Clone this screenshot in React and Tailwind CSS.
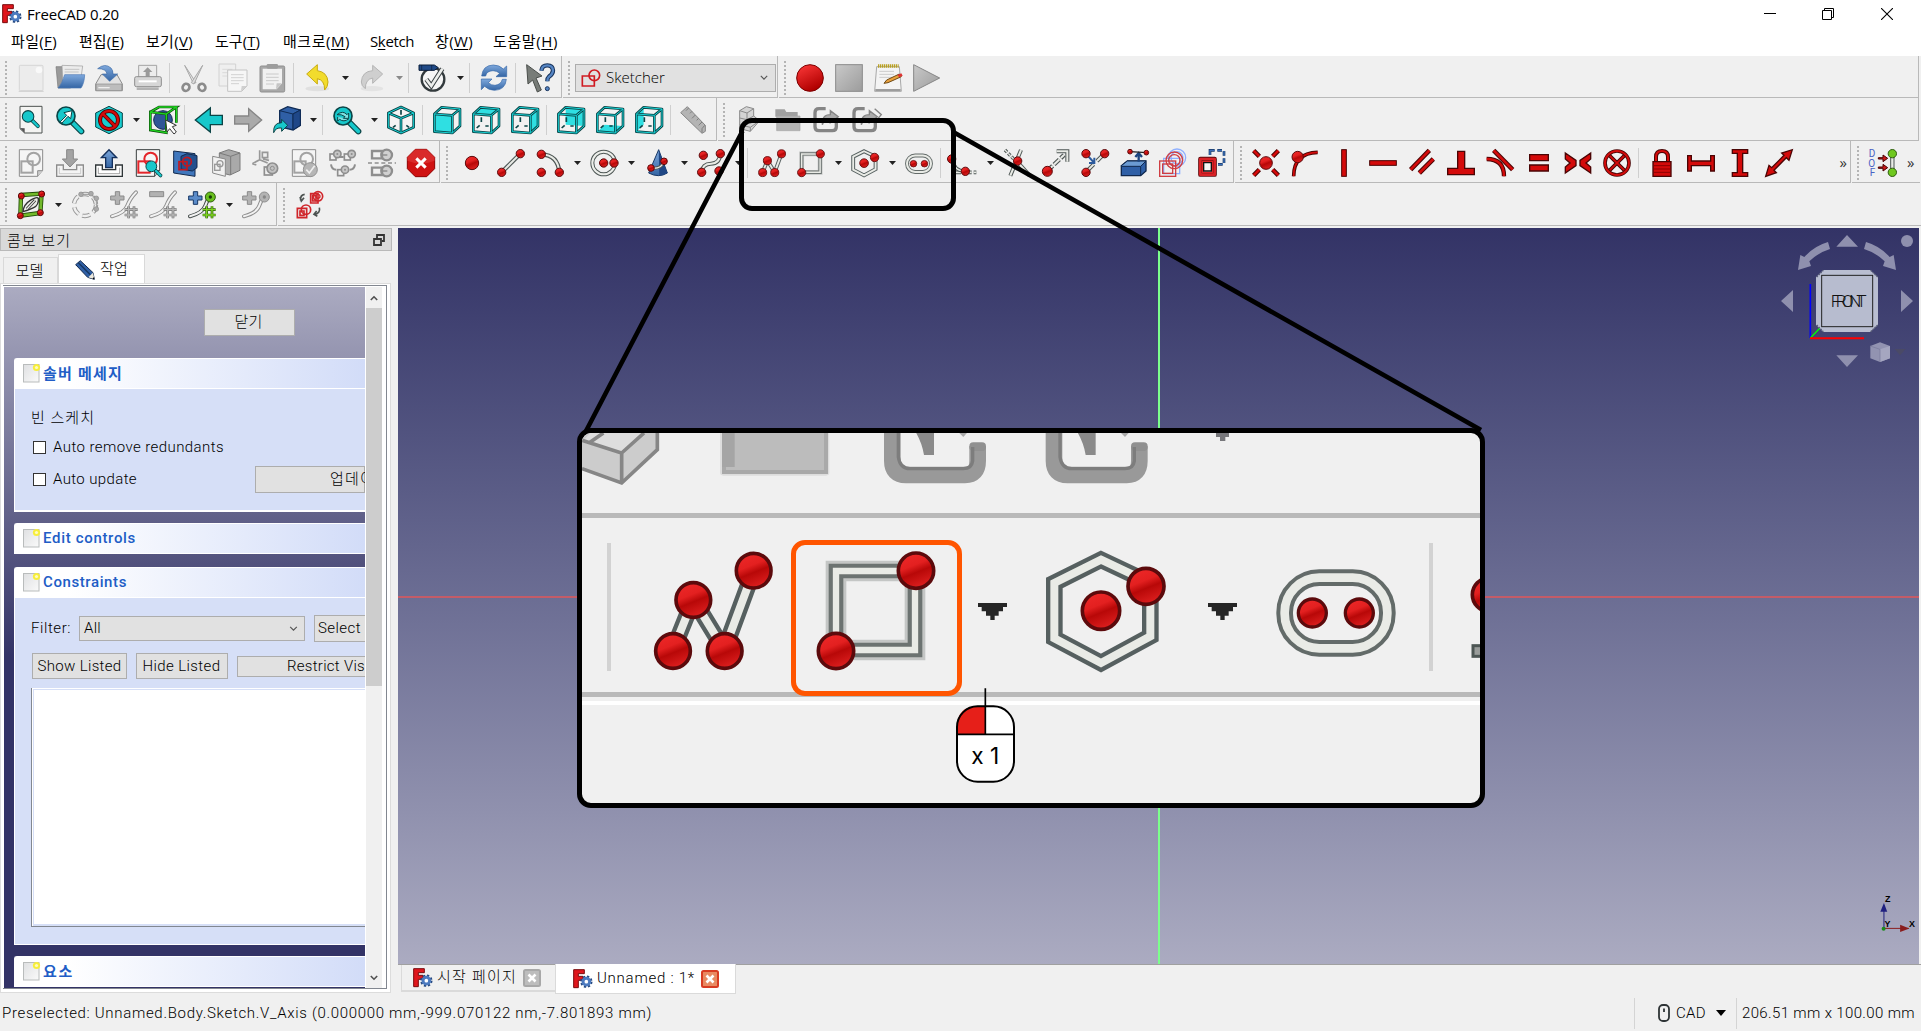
import React, { useLayoutEffect, useRef } from "react";

/* ---------- text that fills a given width through its letter spacing ---------- */
function Fit({ w, className = "", children }) {
  const ref = useRef(null);
  useLayoutEffect(() => {
    const el = ref.current;
    const fit = () => {
      el.style.letterSpacing = "0px";
      const n = el.textContent.length;
      const natural = el.getBoundingClientRect().width;
      el.style.letterSpacing = `${(w - natural) / n}px`;
    };
    fit();
    document.fonts?.ready.then(fit);
  }, [w]);
  return (
    <span ref={ref} className={`inline-block shrink-0 whitespace-pre ${className}`}>
      {children}
    </span>
  );
}

const UI = "font-['Open_Sans','Noto_Sans_CJK_KR',sans-serif]";
const THIN = "font-['Roboto','Noto_Sans_CJK_KR',sans-serif] font-light";

/* ---------- drawing helpers, icons use an 84 x 84 grid ---------- */
const Svg = ({ children, vb = "0 0 84 84", className = "h-7 w-7" }) => (
  <svg viewBox={vb} className={`${className} shrink-0 overflow-visible`} fill="none">
    {children}
  </svg>
);
const Tube = ({ d, o = "#4d5654", i = "#e9ebe6", w = 12, t = 3, cap = "butt", join = "miter", dash }) => (
  <>
    <path d={d} stroke={o} strokeWidth={w} strokeLinecap={cap} strokeLinejoin={join} strokeDasharray={dash} />
    <path d={d} stroke={i} strokeWidth={w - 2 * t} strokeLinecap={cap} strokeLinejoin={join} strokeDasharray={dash} />
  </>
);
const Node = ({ x, y, r = 12.5, s = 3 }) => (
  <circle cx={x} cy={y} r={r} fill="url(#node)" stroke="#5c0a0c" strokeWidth={s} />
);
const RED = { o: "#4a0505", i: "#d40a0a" };
const TEAL = { o: "#0b4446", i: "#17d3d6" };

const Defs = () => (
  <svg className="absolute h-0 w-0">
    <defs>
      <linearGradient id="node" x1="0" y1="0" x2="0.4" y2="1">
        <stop offset="0" stopColor="#f02a2a" />
        <stop offset="0.45" stopColor="#e32020" />
        <stop offset="0.65" stopColor="#b80808" />
        <stop offset="1" stopColor="#d81c1c" />
      </linearGradient>
      <linearGradient id="blue" x1="0" y1="0" x2="0" y2="1">
        <stop offset="0" stopColor="#7fa9dd" />
        <stop offset="1" stopColor="#3465a4" />
      </linearGradient>
      <linearGradient id="grey" x1="0" y1="0" x2="1" y2="1">
        <stop offset="0" stopColor="#c9c9c9" />
        <stop offset="1" stopColor="#9c9c9c" />
      </linearGradient>
      <linearGradient id="paper" x1="0" y1="0" x2="1" y2="1">
        <stop offset="0" stopColor="#dfe0e2" />
        <stop offset="1" stopColor="#fafafa" />
      </linearGradient>
      <linearGradient id="rec" x1="0" y1="0" x2="0.5" y2="1">
        <stop offset="0" stopColor="#ff3b3b" />
        <stop offset="1" stopColor="#b00000" />
      </linearGradient>
    </defs>
  </svg>
);

/* ---------- file and edit icons ---------- */
const I = {};
I.new = (
  <Svg>
    <rect x="7" y="4" width="71" height="76" rx="3" fill="#ececec" stroke="#d6d6d6" strokeWidth="3" />
    <path d="M5 82h75" stroke="#cfcfcf" strokeWidth="3" />
    <circle cx="66" cy="18" r="10" fill="#f9f9f9" />
  </Svg>
);
I.open = (
  <Svg>
    <path d="M0 8h20l4 4h20v60H6z" fill="#9a9a9a" stroke="#777" strokeWidth="2" />
    <path d="M18 4l62 2-6 44H20z" fill="#ececec" stroke="#9a9a9a" strokeWidth="2" />
    <path d="M26 16h44M26 24h42" stroke="#c4c4c4" strokeWidth="3" />
    <path d="M26 32h60q-1 26-11 40H6q12-12 20-40z" fill="url(#blue)" stroke="#4b79b5" strokeWidth="2" />
  </Svg>
);
I.save = (
  <Svg>
    <path d="M18 32h48l16 28v20H2V60z" fill="#e2e2e2" stroke="#8b8b8b" strokeWidth="3" />
    <path d="M4 60h76v20H4z" fill="#bdbdbd" stroke="#8b8b8b" strokeWidth="2" />
    <path d="M10 71h34" stroke="#eee" strokeWidth="4" />
    <path d="M8 14Q30-4 48 12q6 6 6 18h14L44 52 22 30h14q-2-16-28-16z" fill="url(#blue)" stroke="#3a68a5" strokeWidth="2" />
  </Svg>
);
I.print = (
  <Svg>
    <path d="M14 4h54v36H14z" fill="#ececec" stroke="#a4a4a4" strokeWidth="3" />
    <path d="M41 10l14 14h-8v14H35V24h-8z" fill="#9a9a9a" />
    <rect x="2" y="38" width="80" height="30" rx="5" fill="#d6d6d6" stroke="#8f8f8f" strokeWidth="3" />
    <path d="M14 52h54" stroke="#fff" strokeWidth="6" />
    <path d="M8 70h66v8H8z" fill="#b2b2b2" />
  </Svg>
);
I.cut = (
  <Svg>
    <path d="M14 4l34 52-8 2z" fill="#e6e6e6" stroke="#a9a9a9" strokeWidth="3" />
    <path d="M68 4L34 56l8 4z" fill="#dcdcdc" stroke="#a9a9a9" strokeWidth="3" />
    <ellipse cx="18" cy="70" rx="10" ry="11" transform="rotate(35 18 70)" stroke="#8b8b8b" strokeWidth="8" />
    <ellipse cx="66" cy="70" rx="10" ry="11" transform="rotate(-35 66 70)" stroke="#8b8b8b" strokeWidth="8" />
  </Svg>
);
I.copy = (
  <Svg>
    <path d="M0 0h50v66H0z" fill="#efefef" stroke="#d2d2d2" strokeWidth="3" />
    <path d="M10 16h30M10 26h30M10 36h20" stroke="#dadada" strokeWidth="3" />
    <path d="M26 18h58v48L68 82H26z" fill="#f6f6f6" stroke="#c4c4c4" strokeWidth="3" />
    <path d="M36 32h38M36 41h38M36 50h38M36 59h24" stroke="#d2d2d2" strokeWidth="3" />
    <path d="M66 82l2-16h16z" fill="#cfcfcf" />
  </Svg>
);
I.paste = (
  <Svg>
    <rect x="6" y="6" width="74" height="78" rx="4" fill="#a8a8a8" stroke="#8e8e8e" strokeWidth="3" />
    <path d="M14 14h58v44L56 76H14z" fill="#f1f1f1" />
    <rect x="26" y="0" width="34" height="14" rx="4" fill="#9d9d9d" />
    <path d="M24 30h38M24 40h38M24 50h38M24 60h24" stroke="#cacaca" strokeWidth="3" />
    <path d="M54 76l2-18h16z" fill="#c5c5c5" />
  </Svg>
);
I.undo = (
  <Svg>
    <ellipse cx="40" cy="74" rx="36" ry="8" fill="#e0e0e0" />
    <path d="M8 30L40 2v18q30 4 32 34 0 14-10 24 0-30-22-34v16z" fill="#f2dc2c" stroke="#c9ab10" strokeWidth="3" />
  </Svg>
);
I.redo = (
  <Svg>
    <ellipse cx="42" cy="74" rx="34" ry="8" fill="#e3e3e3" />
    <path d="M74 30L44 4v16Q12 22 10 54q0 12 12 20 0-28 22-32v16z" fill="#cfcfcf" stroke="#b5b5b5" strokeWidth="3" />
  </Svg>
);
I.check = (
  <Svg>
    <circle cx="42" cy="46" r="34" fill="#f6f6f6" stroke="#333a3d" strokeWidth="7" />
    <path d="M22 46l15 20L70 14" stroke="#3a4144" strokeWidth="14" />
    <path d="M22 46l15 20L70 14" stroke="#eceeec" strokeWidth="8" />
    <path d="M0 3h46l12 8-12 8H0z" fill="#204a87" stroke="#0b1e3a" strokeWidth="3" />
    <path d="M8 3v16M38 3v16" stroke="#0b1e3a" strokeWidth="2" />
  </Svg>
);
I.refresh = (
  <Svg>
    <path d="M5 36Q8 4 40 3q18 0 30 12l10-9v32H48l11-10q-8-8-20-8-20 1-22 16z" fill="url(#blue)" stroke="#3566a8" strokeWidth="2" />
    <path d="M79 46q-3 32-35 33-18 0-30-12L4 77V45h32L25 56q8 8 20 8 18-2 22-18z" fill="url(#blue)" stroke="#3566a8" strokeWidth="2" />
  </Svg>
);
I.whats = (
  <Svg>
    <path d="M2 2l46 34-18 6 16 36-12 6-14-36L6 60z" fill="#787c78" stroke="#4a4e4b" strokeWidth="3" />
    <path d="M46 20q2-16 18-16t17 15q0 11-12 19-5 4-5 14" stroke="#17325a" strokeWidth="13" />
    <path d="M46 20q2-16 18-16t17 15q0 11-12 19-5 4-5 14" stroke="#5585c4" strokeWidth="7" />
    <circle cx="64" cy="74" r="6" fill="#5585c4" stroke="#17325a" strokeWidth="3" />
  </Svg>
);
I.record = (
  <Svg>
    <circle cx="42" cy="42" r="40" fill="url(#rec)" stroke="#7d0000" strokeWidth="3" />
  </Svg>
);
I.stop = (
  <Svg>
    <rect x="2" y="2" width="80" height="80" fill="url(#grey)" stroke="#8b8b8b" strokeWidth="3" />
  </Svg>
);
I.note = (
  <Svg>
    <path d="M8 8h68l6 74H2z" fill="#f4f4f4" stroke="#a8a8a8" strokeWidth="3" />
    <path d="M4 78h76" stroke="#8d8d8d" strokeWidth="5" />
    <path d="M12 6h62" stroke="#b9a021" strokeWidth="11" strokeDasharray="4 2" />
    <path d="M16 22h44M16 31h44M16 40h40" stroke="#ccc" strokeWidth="3" />
    <path d="M30 58l8-10 38-18 6 8-40 18z" fill="#e9a13c" stroke="#6f4b18" strokeWidth="3" />
    <path d="M70 33l12-5 4 7-10 5z" fill="#d33" />
  </Svg>
);
I.play = (
  <Svg>
    <path d="M2 2l78 40L2 82z" fill="url(#grey)" stroke="#868686" strokeWidth="3" />
  </Svg>
);

/* ---------- view icons ---------- */
const Lens = ({ children, x = 0, y = 0, k = 1 }) => (
  <g transform={`translate(${x} ${y}) scale(${k})`}>
    <path d="M50 50l26 26" stroke="#0b4446" strokeWidth="18" strokeLinecap="round" />
    <path d="M50 50l26 26" stroke="#17c8cb" strokeWidth="11" strokeLinecap="round" />
    <circle cx="30" cy="30" r="27" fill="#17c8cb" stroke="#0b4446" strokeWidth="5" />
    {children}
  </g>
);
I.fitAll = (
  <Svg>
    <path d="M9 1h66v80H23L9 68z" fill="#f4f4f2" stroke="#4d5250" strokeWidth="3" />
    <path d="M9 66l14 1v15z" fill="#555" />
    <Lens x={14} y={12} k={0.64} />
  </Svg>
);
I.fitSel = (
  <Svg>
    <Lens>
      <path d="M12 48l20-20-8-8 24-6-4 24-8-7-18 20z" fill="#fff" stroke="#0b4446" strokeWidth="3" />
    </Lens>
  </Svg>
);
I.drawStyle = (
  <Svg>
    <path d="M42 1l40 20v42L42 83 2 63V21z" fill="#17cdd0" stroke="#0b4446" strokeWidth="3" />
    <circle cx="42" cy="42" r="27" stroke="#4a0505" strokeWidth="12" />
    <path d="M23 23l38 38" stroke="#4a0505" strokeWidth="12" />
    <circle cx="42" cy="42" r="27" stroke="#d40a0a" strokeWidth="7" />
    <path d="M23 23l38 38" stroke="#d40a0a" strokeWidth="7" />
  </Svg>
);
I.bound = (
  <Svg>
    <circle cx="42" cy="42" r="28" fill="#2f5596" stroke="#112a55" strokeWidth="3" />
    <Tube d="M4 18L52 24V80L4 72zM4 18L30 3H82L52 24M82 3V50" o="#0c4d0c" i="#1fd31f" w={8} t={2} />
    <path d="M50 42l32 16-12 4 12 16-7 6-13-16-8 10z" fill="#fff" stroke="#333" strokeWidth="3" />
  </Svg>
);
I.back = (
  <Svg>
    <path d="M1 42L46 6v22h36v28H46v22z" fill="#17c8cb" stroke="#0b4446" strokeWidth="4" />
  </Svg>
);
I.forward = (
  <Svg>
    <path d="M83 42L44 8v22H2v24h42v22z" fill="#aaaaaa" stroke="#868686" strokeWidth="4" />
  </Svg>
);
I.linked = (
  <Svg>
    <path d="M20 14L44 2l38 10v46L60 72 20 62z" fill="#2f5fa6" stroke="#0f2b55" strokeWidth="4" />
    <path d="M20 14l40 10v46M60 24l22-12" stroke="#0f2b55" strokeWidth="3" />
    <path d="M60 24l22-12v46L60 72z" fill="#1f4788" stroke="#0f2b55" strokeWidth="3" />
    <path d="M2 80Q0 50 26 50V40l18 18-18 18V66Q8 64 2 80z" fill="#17c8cb" stroke="#0b4446" strokeWidth="3" />
  </Svg>
);
I.sync = (
  <Svg>
    <Lens>
      <path d="M12 26q18-14 30 0l5-5v16H31l5-5q-10-8-24-6zM48 38q-16 12-28 2l-6 5V33" stroke="#0b4446" strokeWidth="3" fill="#7fe3e4" />
    </Lens>
  </Svg>
);
I.iso = (
  <Svg>
    <path d="M42 2l39 18v44L42 82 3 64V20z" fill="#f4f4f4" />
    <Tube d="M42 3l38 18v43L42 81 4 64V21zM4 21l38 16 38-16M42 37V81" {...TEAL} w={8} t={2.5} join="round" />
    <path d="M42 12v14M18 64l8-6M66 64l-8-6" stroke="#0b4446" strokeWidth="5" />
  </Svg>
);
const faces = {
  front: "M4 24L58 28V81L4 77z",
  top: "M4 24L26 4L81 9L58 28z",
  right: "M58 28L81 9V60L58 81z",
  rear: "M26 4L81 9V60L26 56z",
  bottom: "M4 77L26 56L81 60L58 81z",
  left: "M4 24L26 4V56L4 77z",
};
const Cube = ({ face }) => (
  <Svg>
    <path d="M4 24L26 4L81 9V60L58 81L4 77z" fill="#f2f2f2" />
    <path d={faces[face]} fill="#2fdfe2" />
    {face !== "front" && <path d="M28 34v14M14 66l9-8M40 60h10" stroke="#0b4446" strokeWidth="5" />}
    <Tube d="M4 24L58 28V81L4 77zM4 24L26 4L81 9L58 28M81 9V60L58 81" {...TEAL} w={8} t={2.5} join="round" />
  </Svg>
);
I.ruler = (
  <Svg>
    <path d="M22 2L76 58V76L66 82 2 20z" fill="#b4b4b4" stroke="#868686" strokeWidth="3" />
    <path d="M26 6l-8 8M36 16l-6 6M46 27L36 37M56 37l-6 6M66 48L56 58M74 58l-8 10v12" stroke="#7e7e7e" strokeWidth="3" />
  </Svg>
);
I.part = (
  <Svg>
    <path d="M14 14L34 2l22 6v22l18 14-28 32-32-8z" fill="#d4d4d4" stroke="#8a8a8a" strokeWidth="3" />
    <path d="M14 14l22 7 20-13M36 21v20L14 36M36 41l20-11M14 56l32 8 28-20M46 64v12" stroke="#8a8a8a" strokeWidth="3" />
  </Svg>
);
I.group = (
  <Svg>
    <path d="M4 10h28l5 8h34v14H4z" fill="#a0a0a0" />
    <path d="M8 30h70v44H8z" fill="#b5b5b5" stroke="#a5a5a5" strokeWidth="2" />
  </Svg>
);
const Link = ({ twice }) => (
  <Svg>
    <path d="M38 8H18Q6 8 6 20v42q0 12 12 12h40q12 0 12-12V50" stroke="#858585" strokeWidth="10" />
    <path d="M28 56q-2-30 24-30V14l24 18-24 18V40Q34 38 28 56z" fill="#ababab" stroke="#858585" strokeWidth="4" />
    {twice && <path d="M68 8l20 18-14 16" stroke="#858585" strokeWidth="4" />}
  </Svg>
);
I.link = <Link />;
I.links = <Link twice />;

/* ---------- sketcher document icons ---------- */
const Doc = ({ c = "#a3a3a3", b = "#8c8c8c", children }) => (
  <Svg>
    <path d="M7 2h70v62L62 82H7z" fill="#f5f5f5" stroke={b} strokeWidth="3" />
    <path d="M62 82V65h15" fill="#ccc" stroke={b} strokeWidth="3" />
    <rect x="13" y="37" width="34" height="34" stroke={c} strokeWidth="6" />
    <circle cx="50" cy="30" r="19" stroke={c} strokeWidth="6" />
    {children}
  </Svg>
);
I.newSketch = <Doc />;
I.attach = (
  <Svg>
    <path d="M2 48h20v14h40V48h20v34H2z" fill="#f4f4f4" stroke="#8c8c8c" strokeWidth="4" />
    <path d="M10 56v18h64V56" stroke="#b5b5b5" strokeWidth="2" />
    <path d="M32 2h20v28h13L42 54 19 30h13z" fill="#a3a3a3" stroke="#888" strokeWidth="3" />
  </Svg>
);
I.leave = (
  <Svg>
    <path d="M2 48h20v14h40V48h20v34H2z" fill="#fff" stroke="#2f3638" strokeWidth="4" />
    <path d="M10 56v18h64V56" stroke="#777" strokeWidth="2" />
    <path d="M32 56V26H19L42 2l23 24H52v30z" fill="url(#blue)" stroke="#14305c" strokeWidth="4" />
  </Svg>
);
I.viewSketch = (
  <Doc c="#e4252a" b="#3a3f3f">
    <Lens x={34} y={34} k={0.6} />
  </Doc>
);
I.section = (
  <Svg>
    <path d="M2 6l64 8v68L2 72z" fill="#4077bd" stroke="#12294d" strokeWidth="3" />
    <path d="M24 22l18-8 30 6v36l-14 10-34-6z" fill="#24508e" stroke="#12294d" strokeWidth="3" />
    <rect x="18" y="38" width="24" height="24" stroke="#c01820" strokeWidth="5" />
    <circle cx="42" cy="38" r="13" stroke="#c01820" strokeWidth="5" />
  </Svg>
);
I.mapSketch = (
  <Svg>
    <path d="M22 12L50 2l34 10v52L54 78 22 70z" fill="#a9a9a9" stroke="#7a7a7a" strokeWidth="3" />
    <path d="M22 12l34 10v56M56 22l28-10" stroke="#7a7a7a" strokeWidth="3" />
    <path d="M2 22l38 8v52L2 72z" fill="#f1f1f1" stroke="#8a8a8a" strokeWidth="3" />
    <rect x="8" y="46" width="16" height="18" stroke="#999" strokeWidth="4" />
    <circle cx="24" cy="44" r="9" stroke="#999" strokeWidth="4" />
  </Svg>
);
I.reorient = (
  <Svg>
    <path d="M26 4v28M4 44l22-12 24 10M4 44l12 4M34 10h16v16H34zM36 30l18 4" stroke="#989898" strokeWidth="5" />
    <rect x="40" y="54" width="24" height="24" stroke="#8e8e8e" strokeWidth="5" />
    <circle cx="64" cy="58" r="16" fill="#c2c2c2" stroke="#8e8e8e" strokeWidth="5" />
    <circle cx="64" cy="58" r="6" stroke="#8e8e8e" strokeWidth="3" />
  </Svg>
);
I.validate = (
  <Doc>
    <circle cx="61" cy="62" r="21" fill="#b5b5b5" stroke="#909090" strokeWidth="3" />
    <path d="M49 62l9 10 16-22" stroke="#eee" strokeWidth="5" />
  </Doc>
);
const Mini = ({ x, y, o = "#8e8e8e" }) => (
  <g transform={`translate(${x} ${y})`}>
    <rect x="0" y="12" width="18" height="18" stroke={o} strokeWidth="5" />
    <circle cx="22" cy="12" r="11" fill="#c6c6c6" stroke={o} strokeWidth="5" />
    <circle cx="22" cy="12" r="3" fill={o} />
  </g>
);
I.merge = (
  <Svg>
    <Mini x={3} y={3} />
    <Mini x={46} y={3} />
    <Mini x={26} y={50} />
    <path d="M6 46q2 16 16 16M78 46q-2 16-16 16M30 24h14" stroke="#8e8e8e" strokeWidth="6" />
  </Svg>
);
I.mirror = (
  <Svg>
    <path d="M0 42h84" stroke="#8e8e8e" strokeWidth="5" strokeDasharray="12 8" />
    <circle cx="56" cy="18" r="16" fill="#d0d0d0" stroke="#8e8e8e" strokeWidth="7" />
    <circle cx="56" cy="66" r="16" fill="#d0d0d0" stroke="#8e8e8e" strokeWidth="7" />
    <path d="M12 6h30v22H12zM12 56h30v22H12z" stroke="#8e8e8e" strokeWidth="7" />
    <path d="M42 18h16M42 66h16" stroke="#8e8e8e" strokeWidth="5" />
  </Svg>
);
I.stopOp = (
  <Svg>
    <path d="M25 1h34l24 24v34L59 83H25L1 59V25z" fill="#cf1212" stroke="#8f0000" strokeWidth="3" />
    <path d="M25 1h34l24 24v10Q42 52 1 35V25z" fill="#e03a3a" opacity=".6" />
    <path d="M28 28l28 28M56 28L28 56" stroke="#fff" strokeWidth="9" />
  </Svg>
);

/* ---------- geometry icons ---------- */
I.point = (
  <Svg>
    <Node x={42} y={42} r={20} />
  </Svg>
);
I.line = (
  <Svg>
    <Tube d="M14 70L70 14" w={13} t={3.5} />
    <Node x={14} y={70} />
    <Node x={70} y={14} />
  </Svg>
);
I.arc = (
  <Svg>
    <Tube d="M16 16Q66 18 70 70" w={13} t={3.5} />
    <Node x={16} y={16} />
    <Node x={16} y={70} />
    <Node x={70} y={70} />
  </Svg>
);
I.circle = (
  <Svg>
    <circle cx="41" cy="42" r="34" stroke="#4d5654" strokeWidth="12" />
    <circle cx="41" cy="42" r="34" stroke="#eceeea" strokeWidth="6" />
    <Node x={41} y={42} />
    <Node x={72} y={42} />
  </Svg>
);
I.conic = (
  <Svg>
    <path d="M44 2l26 70q-26 16-56 0z" fill="url(#blue)" stroke="#173765" strokeWidth="3" />
    <path d="M44 2l26 70q-12 6-24 8z" fill="#1f4785" />
    <Tube d="M21 57Q50 62 60 38" w={9} t={2.5} />
    <Node x={21} y={57} r={10} />
    <Node x={60} y={37} r={10} />
  </Svg>
);
I.bspline = (
  <Svg>
    <Tube d="M14 70Q16 44 42 44T70 14" w={12} />
    <Node x={14} y={70} />
    <Node x={19} y={19} />
    <Node x={70} y={14} />
    <Node x={66} y={66} />
  </Svg>
);
const Polyline = ({ size = "h-7 w-7" }) => (
  <Svg vb="250 392 360 360" className={size}>
    <Tube d="M310 692L371 540L464 692L552 454" w={50} t={13} o="#566060" />
    <Node x={310} y={695} r={52} s={11} />
    <Node x={371} y={542} r={52} s={11} />
    <Node x={465} y={695} r={52} s={11} />
    <Node x={552} y={454} r={52} s={11} />
  </Svg>
);
const Rectangle = ({ size = "h-7 w-7" }) => (
  <Svg vb="737 392 360 360" className={size}>
    <path d="M797 455H1034V692H797z" stroke="#c4c6c5" strokeWidth="62" />
    <path d="M797 455H1034V692H797z" stroke="#6c7371" strokeWidth="44" />
    <path d="M797 455H1034V692H797z" stroke="#e9ebe6" strokeWidth="19" />
    <Node x={797} y={695} r={53} s={11} />
    <Node x={1037} y={454} r={53} s={11} />
  </Svg>
);
const Polygon = ({ size = "h-7 w-7" }) => (
  <Svg vb="45 392 360 360" className={size}>
    <Tube d="M213 421L361 491V651L213 731L73 657V491z" w={50} t={13} o="#566060" />
    <Node x={213} y={574} r={56} s={11} />
    <Node x={348} y={501} r={54} s={11} />
  </Svg>
);
const Slot = ({ size = "h-7 w-7" }) => (
  <Svg vb="737 392 360 360" className={size}>
    <rect x="763" y="475" width="308" height="212" rx="104" stroke="#636b69" strokeWidth="50" />
    <rect x="763" y="475" width="308" height="212" rx="104" stroke="#e9ebe6" strokeWidth="26" />
    <Node x={846} y={581} r={42} s={10} />
    <Node x={987} y={581} r={42} s={10} />
  </Svg>
);
const Fillet = () => (
  <Svg>
    <path d="M9 4v66h70" stroke="#4d5654" strokeWidth="11" strokeDasharray="26 6" />
    <path d="M9 4v66h70" stroke="#e9ebe6" strokeWidth="5" strokeDasharray="26 6" />
    <Tube d="M9 34Q12 66 45 66" w={10} />
    <Node x={5} y={30} />
    <Node x={46} y={67} />
  </Svg>
);
I.trim = (
  <Svg>
    <Tube d="M22 80L54 3" w={12} />
    <Tube d="M46 42L80 80" w={12} />
    <Tube d="M6 3L34 32" w={10} dash="9 5" />
    <Node x={44} y={36} />
  </Svg>
);
I.extend = (
  <Svg>
    <Tube d="M16 66L66 18" w={13} t={3.5} dash="22 6" />
    <Tube d="M44 7H76V38" w={12} />
    <Node x={16} y={67} r={15} />
  </Svg>
);
I.split = (
  <Svg>
    <Tube d="M14 70L38 46" w={12} />
    <Tube d="M48 36L70 14" w={12} />
    <path d="M20 20L40 42M40 26V42H24" stroke="#2c5a9c" strokeWidth="6" />
    <Node x={15} y={14} />
    <Node x={71} y={14} />
    <Node x={15} y={70} />
  </Svg>
);
I.external = (
  <Svg>
    <path d="M4 50L22 36H78V66L62 80H4z" fill="#2f5fa6" stroke="#10284e" strokeWidth="4" />
    <path d="M4 50L22 36H78L62 52H4z" fill="#6b9bd3" stroke="#10284e" strokeWidth="3" />
    <path d="M62 52V80" stroke="#10284e" strokeWidth="3" />
    <path d="M56 38V16M46 24L56 12L66 24" stroke="#1d4680" strokeWidth="7" />
    <path d="M30 8L80 11" stroke="#222" strokeWidth="4" />
    <Node x={30} y={8} r={7} />
    <Node x={79} y={11} r={7} />
  </Svg>
);
I.carbon = (
  <Svg>
    <path d="M14 28H62V74H14z" stroke="#8fb0ff" strokeWidth="4" />
    <circle cx="54" cy="26" r="26" stroke="#8fb0ff" strokeWidth="4" />
    <circle cx="54" cy="26" r="18" stroke="#8fb0ff" strokeWidth="4" />
    <rect x="2" y="36" width="48" height="46" stroke="#cf3d42" strokeWidth="4" />
    <rect x="11" y="45" width="30" height="28" stroke="#cf3d42" strokeWidth="4" />
    <circle cx="46" cy="34" r="25" stroke="#cf3d42" strokeWidth="4" />
    <circle cx="46" cy="34" r="17" stroke="#cf3d42" strokeWidth="4" />
  </Svg>
);
I.construction = (
  <Svg>
    <path d="M36 4H78V46H36z" stroke="#173765" strokeWidth="8" strokeDasharray="14 8" />
    <path d="M36 4H78V46H36z" stroke="#3b6fb8" strokeWidth="4" strokeDasharray="14 8" />
    <path d="M7 30H50V77H7z" stroke="#5c0a0c" strokeWidth="13" strokeLinejoin="round" />
    <path d="M7 30H50V77H7z" stroke="#d92126" strokeWidth="8" strokeLinejoin="round" />
    <path d="M14 37H43V70H14z" fill="#fff" stroke="#d92126" strokeWidth="4" />
    <path d="M17 41H40V66H17z" fill="#f3f3f3" stroke="#111" strokeWidth="4" />
  </Svg>
);

/* ---------- constraint icons ---------- */
I.coincident = (
  <Svg>
    <Tube d="M5 5L22 22M79 5L62 22M5 79L22 62M79 79L62 62" {...RED} w={14} />
    <Node x={42} y={42} r={19} />
  </Svg>
);
I.onObject = (
  <Svg>
    <Tube d="M8 82Q8 12 80 10" {...RED} w={11} />
    <Node x={20} y={24} r={17} />
  </Svg>
);
I.vertical = (
  <Svg>
    <rect x="35" y="2" width="14" height="80" fill="#d40a0a" stroke="#4a0505" strokeWidth="3" />
  </Svg>
);
I.horizontal = (
  <Svg>
    <rect x="2" y="35" width="80" height="14" fill="#d40a0a" stroke="#4a0505" strokeWidth="3" />
  </Svg>
);
I.parallel = (
  <Svg>
    <Tube d="M8 62L64 4M34 72L76 30" {...RED} w={14} />
  </Svg>
);
I.perp = (
  <Svg>
    <path d="M32 7H53V58H82V77H2V58H32z" fill="#d40a0a" stroke="#4a0505" strokeWidth="4" />
  </Svg>
);
I.tangent = (
  <Svg>
    <Tube d="M23 4L80 62" {...RED} w={14} />
    <Tube d="M2 30Q54 30 54 82" {...RED} w={13} />
  </Svg>
);
I.equal = (
  <Svg>
    <path d="M14 17H70V35H14zM14 48H70V66H14z" fill="#d40a0a" stroke="#4a0505" strokeWidth="4" />
  </Svg>
);
I.symmetric = (
  <Svg>
    <path d="M4 12L36 34V50L4 72V54L18 42L4 30zM80 12L48 34V50L80 72V54L66 42L80 30z" fill="#d40a0a" stroke="#4a0505" strokeWidth="4" />
  </Svg>
);
I.block = (
  <Svg>
    <Tube d="M16 16L68 68M68 16L16 68" {...RED} w={11} />
    <circle cx="42" cy="42" r="36" stroke="#4a0505" strokeWidth="11" />
    <circle cx="42" cy="42" r="36" stroke="#d40a0a" strokeWidth="6" />
  </Svg>
);
I.lock = (
  <Svg>
    <Tube d="M24 40V24Q24 6 42 6T60 24V40" {...RED} w={12} />
    <path d="M15 38H69V82H15z" fill="#d40a0a" stroke="#4a0505" strokeWidth="4" />
    <path d="M18 50H66M18 60H66M18 70H66" stroke="#8d0000" strokeWidth="3" />
  </Svg>
);
I.hdist = (
  <Svg>
    <path d="M2 20H13V36H71V20H82V66H71V50H13V66H2z" fill="#d40a0a" stroke="#4a0505" strokeWidth="4" />
  </Svg>
);
I.vdist = (
  <Svg>
    <path d="M19 2H65V13H50V71H65V82H19V71H34V13H19z" fill="#d40a0a" stroke="#4a0505" strokeWidth="4" />
  </Svg>
);
I.dist = (
  <Svg>
    <path d="M82 2L72 34 64 26 27 64 34 71 2 82 12 49 20 56 57 19 50 12z" fill="#d40a0a" stroke="#4a0505" strokeWidth="4" />
  </Svg>
);
I.dof = (
  <Svg>
    <g className="font-['Roboto',sans-serif]" fill="#4a62c4" fontSize="30">
      <text x="-1" y="24">D</text>
      <text x="-2" y="53">O</text>
      <text x="2" y="82">F</text>
    </g>
    <Tube d="M70 14V70" w={13} t={3} />
    <path d="M28 26H42V18L56 28L42 38V30H28zM28 54H42V46L56 56L42 66V58H28z" fill="#c91a1a" stroke="#4a0505" strokeWidth="3" />
    <circle cx="70" cy="14" r="12.5" fill="#6fc81f" stroke="#2c5c0c" strokeWidth="3" />
    <circle cx="70" cy="70" r="12.5" fill="#6fc81f" stroke="#2c5c0c" strokeWidth="3" />
  </Svg>
);

/* ---------- b-spline row icons ---------- */
I.validSketch = (
  <Svg>
    <path d="M12 12L74 8L70 66L10 74z" stroke="#1f4a08" strokeWidth="13" />
    <path d="M12 12L74 8L70 66L10 74z" stroke="#72b82b" strokeWidth="8" />
    <path d="M18 62Q20 40 40 28T64 22Q66 42 50 50T18 62z" fill="#eceeea" stroke="#333" strokeWidth="4" />
    <path d="M30 54L54 28" stroke="#333" strokeWidth="9" />
    <path d="M30 54L54 28" stroke="#eceeea" strokeWidth="4" />
    <Node x={13} y={15} r={9} />
    <Node x={74} y={9} r={9} />
    <Node x={70} y={65} r={9} />
    <Node x={10} y={74} r={9} />
  </Svg>
);
I.converter = (
  <Svg>
    <circle cx="42" cy="42" r="33" stroke="#999" strokeWidth="13" strokeDasharray="24 12" />
    <circle cx="42" cy="42" r="33" stroke="#f0f0f0" strokeWidth="7" strokeDasharray="24 12" />
    <path d="M30 10L62 10L76 28L78 56" stroke="#a5a5a5" strokeWidth="4" />
    {[[30, 10], [60, 8], [76, 22], [76, 54]].map(([x, y]) => (
      <circle key={y} cx={x} cy={y} r="7" fill="#aaa" stroke="#8d8d8d" strokeWidth="2" />
    ))}
  </Svg>
);
const Hash = ({ o, i }) => <Tube d="M56 46V82M72 46V82M44 56H83M44 72H83" o={o} i={i} w={8} t={2} />;
const Curve = ({ o = "#8f8f8f", i = "#f2f2f2", end = "78 4" }) => (
  <Tube d={`M6 76Q44 66 52 44T${end}`} o={o} i={i} w={12} cap="round" />
);
const Plus = ({ o = "#8a8a8a", i = "#b2b2b2" }) => (
  <path d="M16 2H29V15H42V27H29V40H16V27H2V15H16z" fill={i} stroke={o} strokeWidth="3" />
);
I.degUp = (
  <Svg>
    <Curve />
    <Hash o="#777" i="#b5b5b5" />
    <Plus />
  </Svg>
);
I.degDown = (
  <Svg>
    <Curve />
    <Hash o="#777" i="#b5b5b5" />
    <path d="M2 2H44V17H2z" fill="#b2b2b2" stroke="#8a8a8a" strokeWidth="3" />
  </Svg>
);
I.knotUp = (
  <Svg>
    <Curve o="#444b4a" end="66 18" />
    <Hash o="#2c5c0c" i="#7ed321" />
    <Plus o="#173765" i="#5a8bc9" />
    <circle cx="67" cy="18" r="15" fill="#69bf1e" stroke="#2c5c0c" strokeWidth="3" />
    <circle cx="67" cy="18" r="5" fill="#173c07" />
  </Svg>
);
I.knotIns = (
  <Svg>
    <Curve end="66 18" />
    <Plus />
    <circle cx="67" cy="18" r="15" fill="#b3b3b3" stroke="#8f8f8f" strokeWidth="3" />
    <circle cx="67" cy="18" r="5" fill="#888" />
  </Svg>
);
I.switchSpace = (
  <Svg>
    <path d="M44 8H66V36H44zM50 14H60V30H50z" stroke="#d0262b" strokeWidth="5" />
    <circle cx="66" cy="16" r="14" stroke="#d0262b" strokeWidth="5" />
    <circle cx="66" cy="16" r="6" stroke="#d0262b" strokeWidth="4" />
    <path d="M4 52H32V80H4zM12 60H24V73H12z" stroke="#d0262b" strokeWidth="5" />
    <circle cx="30" cy="56" r="14" stroke="#d0262b" strokeWidth="5" />
    <path d="M14 28Q12 12 26 10M12 18L16 30L24 20M70 50Q74 66 56 70M62 60L54 70L64 76" stroke="#4c5250" strokeWidth="5" />
  </Svg>
);

const Logo = ({ className = "h-5 w-5" }) => (
  <Svg vb="0 0 60 60" className={className}>
    <path d="M2 2H34V14H16V22H30V34H16V56H2z" fill="#e0161c" stroke="#7a0b0e" strokeWidth="3" />
    <circle cx="40" cy="38" r="15" stroke="#274a80" strokeWidth="7" strokeDasharray="6.5 5.3" />
    <circle cx="40" cy="38" r="10" fill="#fff" stroke="#4c7abf" strokeWidth="9" />
  </Svg>
);

/* ---------- toolbar pieces ---------- */
const Cell = ({ children }) => <div className="flex w-[39px] shrink-0 justify-center">{children}</div>;
const Arrow = ({ c = "#222222", w = "w-[15px]" }) => (
  <div className={`flex ${w} shrink-0 justify-center pl-px`}>
    <svg viewBox="0 0 7 4" className="h-1 w-[7px]">
      <path d="M0 0H7L3.5 4z" fill={c} />
    </svg>
  </div>
);
const Sep = ({ w = "w-[7px]" }) => (
  <div className={`${w} shrink-0 pl-[2px]`}>
    <div className="h-[30px] w-px bg-[#cfcfcf]" />
  </div>
);
const Grip = () => (
  <div className="flex w-[11px] shrink-0 flex-col pl-[5px]">
    <div className="h-[34px] w-[2px] bg-[repeating-linear-gradient(180deg,#b4b4b4_0px,#b4b4b4_2px,transparent_2px,transparent_4px)]" />
  </div>
);
const More = () => <span className={`${UI} shrink-0 text-[15px] leading-none text-[#333]`}>»</span>;

const icons = (names) =>
  names.map((n, k) => {
    if (n === "|") return <Sep key={k} />;
    if (n === "s") return <Sep key={k} w="w-[6px]" />;
    if (n === "v") return <Arrow key={k} />;
    if (n === "u") return <Arrow key={k} w="w-[14px]" />;
    if (n === "g") return <Arrow key={k} c="#8a8a8a" />;
    if (faces[n]) return <Cell key={k}><Cube face={n} /></Cell>;
    return <Cell key={k}>{I[n]}</Cell>;
  });

function Bar({ w, children, last }) {
  return (
    <div className={`flex h-full ${w} items-center overflow-hidden border-b border-[#b9b9b9] pt-[2px] ${last ? "" : "border-r"}`}>
      <Grip />
      {children}
    </div>
  );
}
const Row = ({ h, children }) => <div className={`flex ${h} w-full gap-px overflow-hidden`}>{children}</div>;

function Toolbars() {
  return (
    <div className="flex h-[172px] w-full flex-col bg-[#f0f0f0]">
      <Row h="h-[42px]">
        <Bar w="w-[562px]">
          {icons(["new", "open", "save", "print", "|", "cut", "copy", "paste", "|", "undo", "v", "redo", "g", "|", "check", "v", "|", "refresh", "|", "whats"])}
        </Bar>
        <Bar w="w-[215px]">
          <div className="ml-px flex h-[28px] w-[201px] shrink-0 items-center border border-[#adadad] bg-[#e1e1e1] pl-[5px]">
            <svg viewBox="0 0 60 60" className="h-5 w-5" fill="none">
              <path d="M4 24H40V54H4z" stroke="#cf1b22" strokeWidth="5" />
              <circle cx="40" cy="22" r="16" stroke="#cf1b22" strokeWidth="5" />
            </svg>
            <span className={`${UI} ml-[5px] text-[15px] font-light leading-none text-black`}>
              <Fit w={59}>Sketcher</Fit>
            </span>
            <svg viewBox="0 0 10 6" className="ml-auto mr-[7px] h-[5px] w-2" fill="none">
              <path d="M1 1L5 5L9 1" stroke="#555" strokeWidth="1.4" />
            </svg>
          </div>
        </Bar>
        <Bar w="w-[1140px]">{icons(["record", "stop", "note", "play"])}</Bar>
      </Row>
      <Row h="h-[43px]">
        <Bar w="w-[717px]">
          {icons(["fitAll", "fitSel", "drawStyle", "v", "bound", "|", "back", "forward", "linked", "u", "|", "sync", "v", "iso", "|", "front", "top", "right", "|", "rear", "bottom", "left", "s", "ruler"])}
        </Bar>
        <Bar w="w-[1201px]">{icons(["part", "group", "link", "links", "g"])}</Bar>
      </Row>
      <Row h="h-[42px]">
        <Bar w="w-[440px]">
          {icons(["newSketch", "attach", "leave", "viewSketch", "section", "mapSketch", "reorient", "validate", "merge", "mirror", "stopOp"])}
        </Bar>
        <Bar w="w-[793px]">
          {icons(["point", "line", "arc", "v", "circle", "v", "conic", "u", "bspline", "v", "|"])}
          <Cell><Polyline /></Cell>
          <Cell><Rectangle /></Cell>
          <Arrow />
          <Cell><Polygon /></Cell>
          <Arrow />
          <Cell><Slot /></Cell>
          <Sep w="w-[6px]" />
          <Cell><Fillet /></Cell>
          {icons(["u", "trim", "extend", "split", "external", "carbon", "construction"])}
        </Bar>
        <Bar w="w-[616px]">
          {icons(["coincident", "onObject", "vertical", "horizontal", "parallel", "perp", "tangent", "equal", "symmetric", "block", "s", "lock", "hdist", "vdist", "dist"])}
          <div className="ml-auto mr-[3px] flex"><More /></div>
        </Bar>
        <Bar w="w-[68px]" last>
          {icons(["dof"])}
          <div className="ml-[5px] flex"><More /></div>
        </Bar>
      </Row>
      <Row h="h-[43px]">
        <Bar w="w-[277px]">
          {icons(["validSketch", "v", "converter", "degUp", "degDown", "knotUp", "v", "knotIns"])}
        </Bar>
        <Bar w="w-[1643px]" last>
          <div className="w-px" />
          {icons(["switchSpace"])}
        </Bar>
      </Row>
    </div>
  );
}

/* ---------- title and menus ---------- */
const menus = [
  ["파일", "F", 46, "pl-[11px] w-[79px]"],
  ["편집", "E", 45, "w-[67px]"],
  ["보기", "V", 47, "w-[69px]"],
  ["도구", "T", 45, "w-[68px]"],
  ["매크로", "M", 67, "w-[87px]"],
  ["Sketch", null, 44, "w-[65px]"],
  ["창", "W", 38, "w-[58px]"],
  ["도움말", "H", 65, "w-[80px]"],
];
const Header = () => (
  <>
    <div className="flex h-[28px] w-full items-center bg-white">
      <div className="ml-[2px] flex"><Logo /></div>
      <span className={`${UI} ml-[5px] text-[15px] leading-none text-black`}>
        <Fit w={92}>FreeCAD 0.20</Fit>
      </span>
      <div className="ml-auto mr-[28px] flex items-center gap-[46px]">
        <svg viewBox="0 0 12 12" className="h-3 w-3" fill="none"><path d="M0 5.5H12" stroke="#000" /></svg>
        <svg viewBox="0 0 12 12" className="h-3 w-3" fill="none">
          <path d="M.5 2.5H9.5V11.5H.5zM2.5 2.5V.5H11.5V9.5H9.5" stroke="#000" />
        </svg>
        <svg viewBox="0 0 12 12" className="ml-px h-3 w-3" fill="none"><path d="M0 0L12 12M12 0L0 12" stroke="#000" strokeWidth="1.1" /></svg>
      </div>
    </div>
    <div className={`${UI} flex h-[28px] w-full items-center bg-white pb-px text-[15px] leading-none text-black`}>
      {menus.map(([t, k, w, c]) => (
        <div key={t} className={`${c} shrink-0`}>
          <Fit w={w}>
            {k ? <>{t}(<span className="underline underline-offset-2">{k}</span>)</> : <>S<span className="underline underline-offset-2">k</span>etch</>}
          </Fit>
        </div>
      ))}
    </div>
  </>
);

/* ---------- combo view ---------- */
const Leaf = () => (
  <svg viewBox="0 0 17 19" className="h-[19px] w-[17px] shrink-0 overflow-visible">
    <rect x=".5" y=".5" width="15.5" height="17.5" fill="url(#paper)" stroke="#b9bcbc" />
    <circle cx="13.5" cy="3.5" r="3.6" fill="#f7ee3c" />
    <circle cx="13.5" cy="3.5" r="1.6" fill="#fffbc0" />
  </svg>
);
const GroupHead = ({ title, w, kr }) => (
  <div className="flex h-[31px] shrink-0 items-center rounded-tl-[3px] border-y border-l border-white bg-linear-to-r from-white from-15% to-[#d2dcf8] pl-[8px]">
    <Leaf />
    <span className={`font-['Roboto','Noto_Sans_CJK_KR',sans-serif] ml-[3px] text-[15px] leading-none text-[#215dc6] ${kr ? "pt-0.5 font-bold" : "font-medium"}`}>
      <Fit w={w}>{title}</Fit>
    </span>
  </div>
);
const Btn = ({ className, w, children }) => (
  <div className={`flex shrink-0 items-center border border-[#adadad] bg-[#e1e1e1] ${className}`}>
    <Fit w={w}>{children}</Fit>
  </div>
);
const Check = ({ w, children }) => (
  <div className="flex items-center">
    <div className="h-[13px] w-[13px] border border-[#333] bg-white" />
    <Fit w={w} className="ml-[7px]">{children}</Fit>
  </div>
);

const ComboView = () => (
  <div className={`${THIN} flex h-[767px] w-[398px] shrink-0 flex-col bg-[#f0f0f0] text-[15px] leading-none text-black`}>
    <div className="flex h-[23px] w-[392px] items-center border border-[#b9b9b9] bg-[#d9d9d9] pl-[6px] pr-[6px] pt-[3px]">
      <Fit w={64}>콤보 보기</Fit>
      <svg viewBox="0 0 12 12" className="mb-[3px] ml-auto h-3 w-3" fill="none">
        <path d="M4 4V1H11V7H9" stroke="#333" strokeWidth="1.8" />
        <path d="M1 5H8V11H1z" stroke="#333" strokeWidth="1.8" />
      </svg>
    </div>
    <div className="flex h-[33px] items-end pl-[3px]">
      <div className="flex h-[27px] w-[55px] items-center justify-center border-x border-t border-[#d9d9d9] pr-[2px]">
        <Fit w={28}>모델</Fit>
      </div>
      <div className="flex h-[30px] w-[87px] items-center border-x border-t border-[#d9d9d9] bg-white pl-[16px]">
        <svg viewBox="0 0 60 60" className="h-5 w-5" fill="none">
          <path d="M2 14L16 2L54 38L58 58L38 52z" fill="#2f5fa6" stroke="#10284e" strokeWidth="3" />
          <path d="M10 8L46 44" stroke="#17355f" strokeWidth="4" />
          <path d="M54 38L58 58L40 52z" fill="#ece8dc" />
          <path d="M52 56L58 58L57 51z" fill="#000" />
        </svg>
        <Fit w={28} className="ml-[5px]">작업</Fit>
      </div>
    </div>
    <div className="-mt-px h-[710px] w-[391px] border border-[#dcdcdc] bg-white pb-[3px] pl-[2px] pr-[3px] pt-px">
      <div className="flex h-full border-y border-r border-[#828790] pl-px pr-[4px] pt-px">
        <div className="flex w-[361px] shrink-0 flex-col overflow-hidden bg-[linear-gradient(180deg,#ababc1_0px,#333366_370px)] pl-[10px]">
          <Btn className="ml-[190px] mt-[22px] h-[27px] w-[91px] justify-center pr-0.5" w={28}>닫기</Btn>
          <div className="mt-[22px] shrink-0">
            <GroupHead title="솔버 메세지" w={80} kr />
            <div className="flex h-[123px] flex-col border-b-2 border-l border-white bg-[#d6dff7] pt-[22px]">
              <Fit w={64} className="ml-[16px] w-fit self-start">빈 스케치</Fit>
              <div className="ml-[18px] mt-[14px]"><Check w={171}>Auto remove redundants</Check></div>
              <div className="ml-[18px] mt-[11px] flex items-center">
                <Check w={84}>Auto update</Check>
                <Btn className="ml-auto h-[27px] w-[110px] pl-[74px]" w={60}>업데이트</Btn>
              </div>
            </div>
          </div>
          <div className="mt-[11px]"><GroupHead title="Edit controls" w={93} /></div>
          <div className="mt-[13px] shrink-0">
            <GroupHead title="Constraints" w={84} />
            <div className="flex h-[347px] flex-col border-b border-l border-white bg-[#d6dff7] pt-[17px]">
              <div className="ml-[16px] flex items-center">
                <Fit w={40}>Filter:</Fit>
                <div className="ml-[8px] flex h-[25px] w-[226px] shrink-0 items-center border border-[#adadad] bg-[#e1e1e1] pl-[4px]">
                  <Fit w={17}>All</Fit>
                  <svg viewBox="0 0 10 6" className="ml-auto mr-[6px] h-[5px] w-[9px]" fill="none">
                    <path d="M1 1L5 5L9 1" stroke="#555" strokeWidth="1.4" />
                  </svg>
                </div>
                <Btn className="ml-[9px] h-[27px] w-[90px] pl-[3px]" w={43}>Select</Btn>
              </div>
              <div className="ml-[17px] mt-[11px] flex items-center">
                <Btn className="h-[26px] w-[95px] justify-center" w={84}>Show Listed</Btn>
                <Btn className="ml-[9px] h-[26px] w-[92px] justify-center pr-px" w={78}>Hide Listed</Btn>
                <Btn className="ml-[9px] h-[21px] w-[170px] pl-[49px]" w={78}>Restrict Vis</Btn>
              </div>
              <div className="ml-[16px] mt-[9px] h-[239px] shrink-0 border-b border-l border-[#828790]">
                <div className="h-full border-l border-t border-white pb-px">
                  <div className="h-full border-b border-l border-t border-[#d6dff7] bg-white" />
                </div>
              </div>
            </div>
          </div>
          <div className="mt-[11px]"><GroupHead title="요소" w={31} kr /></div>
        </div>
        <div className="ml-px flex w-4 flex-col items-center bg-[#f0f0f0]">
          <div className="flex h-[21px] w-full items-center justify-center">
            <svg viewBox="0 0 10 7" className="h-[6px] w-2" fill="none"><path d="M1 6L5 2L9 6" stroke="#505050" strokeWidth="2" /></svg>
          </div>
          <div className="h-[378px] w-full bg-[#cdcdcd]" />
          <svg viewBox="0 0 10 7" className="mb-[7px] mt-auto h-[6px] w-2" fill="none"><path d="M1 1L5 5L9 1" stroke="#505050" strokeWidth="2" /></svg>
        </div>
      </div>
    </div>
  </div>
);

/* ---------- 3D view ---------- */
const NavCube = () => (
  <svg viewBox="1050 384 450 456" className="absolute -right-px top-0 h-[152px] w-[150px]" fill="#8f90ae">
    <path d="M1281 405L1314 440H1249zM1281 801L1314 766H1249zM1083 603L1119 570V636zM1479 603L1443 570V636z" />
    <circle cx="1461" cy="423" r="18" />
    <path d="M1224 426L1230 447Q1194 458 1168 484L1173 498L1134 510L1141 465L1153 471Q1182 438 1224 426z" />
    <path d="M1338 426L1332 447Q1368 458 1394 484L1389 498L1428 510L1421 465L1409 471Q1380 438 1338 426z" />
    <path d="M1171 552V714" stroke="#0000ff" strokeWidth="5" />
    <path d="M1171 714L1200 684" stroke="#00ff00" strokeWidth="4" />
    <path d="M1170 715H1332" stroke="#ff0000" strokeWidth="6" />
    <path d="M1210 510H1351L1374 532V675L1351 696H1210L1188 675V532z" fill="#b9bed1" />
    <path d="M1190 531L1210 511M1352 511L1373 531M1190 675L1210 695M1352 695L1373 675" stroke="#555a74" strokeWidth="4" strokeDasharray="5 3" />
    <rect x="1205" y="526" width="153" height="154" fill="#b7bccf" stroke="#222" strokeWidth="3" />
    <text x="1232" y="621" textLength="108" fontSize="52" fill="#111" className={THIN}>FRONT</text>
    <path d="M1351 738L1380 727L1410 738V775L1380 786L1351 775z" fill="#9293b1" />
    <path d="M1380 748L1410 738V775L1380 786z" fill="#a5a6c0" />
    <path d="M1351 738L1380 748V786" stroke="#77789a" strokeWidth="2" fill="none" />
    <path d="M1424 747H1457L1440 766z" fill="#4a4a66" />
  </svg>
);
const AxisCross = () => (
  <svg viewBox="770 95 130 130" className="absolute -right-px bottom-[29px] h-[43px] w-[43px]">
    <path d="M791 206V135" stroke="#20207f" strokeWidth="3" />
    <path d="M791 128L801 155H780z" fill="#20207f" />
    <path d="M791 205H866" stroke="#8a1d1d" strokeWidth="3" />
    <path d="M868 205L840 194V216z" fill="#8a1d1d" />
    <circle cx="790" cy="206" r="6" fill="#1c8a1c" />
    <g fontSize="27" fill="#000" className="font-['Liberation_Sans',sans-serif] font-bold">
      <text x="794" y="125">Z</text>
      <text x="793" y="200">Y</text>
      <text x="867" y="200">X</text>
    </g>
  </svg>
);

const CloseBox = ({ on }) => (
  <svg viewBox="0 0 18 18" className="h-[18px] w-[18px]" fill="none">
    <rect x="1" y="1" width="16" height="16" rx="1.5" fill={on ? "#e88a62" : "#bdbdbd"} stroke={on ? "#d83c22" : "#a8a8a8"} strokeWidth="2" />
    <path d="M5.5 5.5L12.5 12.5M12.5 5.5L5.5 12.5" stroke="#fff" strokeWidth="2.6" />
  </svg>
);

const Viewport = () => (
  <div className="flex h-[767px] w-[1523px] shrink-0 flex-col">
    <div className="relative h-[736px] w-[1521px] bg-linear-to-b from-[#333366] to-[#ababc1]">
      <div className="absolute left-0 top-[368px] h-[2px] w-full bg-[#c45c68]" />
      <div className="absolute left-[760px] top-0 h-full w-[2px] bg-[#7cff8c]" />
      <NavCube />
      <AxisCross />
    </div>
    <div className={`${THIN} flex h-[31px] items-start border-t border-[#a0a0a0] bg-[#f0f0f0] pl-[3px] text-[15px] leading-none text-black`}>
      <div className="flex h-[27px] w-[154px] items-center border-b-2 border-l border-[#dadada] pl-[11px]">
        <Logo />
        <Fit w={80} className="ml-[4px]">시작 페이지</Fit>
        <div className="ml-[6px]"><CloseBox /></div>
      </div>
      <div className="-mt-px flex h-[30px] w-[181px] items-center border-x border-b border-[#dadada] bg-white pl-[17px]">
        <Logo />
        <Fit w={98} className="ml-[4px]">Unnamed : 1*</Fit>
        <div className="ml-[6px]"><CloseBox on /></div>
      </div>
    </div>
  </div>
);

const Status = () => (
  <div className={`${THIN} flex h-[36px] w-full items-center bg-[#f0f0f0] pl-[2px] text-[15px] leading-none text-black`}>
    <Fit w={650}>Preselected: Unnamed.Body.Sketch.V_Axis (0.000000 mm,-999.070122 nm,-7.801893 mm)</Fit>
    <div className="ml-auto flex items-center">
      <div className="h-[31px] w-px bg-[#d4d4d4]" />
      <svg viewBox="0 0 12 18" className="ml-[23px] h-[18px] w-3" fill="none">
        <rect x="1" y="1" width="10" height="16" rx="4" stroke="#2e3436" strokeWidth="1.8" />
        <path d="M6 4.5V8" stroke="#2e3436" strokeWidth="1.8" />
      </svg>
      <Fit w={30} className="ml-[6px]">CAD</Fit>
      <svg viewBox="0 0 10 6" className="ml-[10px] h-[6px] w-[10px]"><path d="M0 0H10L5 6z" /></svg>
      <div className="ml-[10px] h-[31px] w-px bg-[#d4d4d4]" />
      <Fit w={173} className="ml-[5px] mr-[6px]">206.51 mm x 100.00 mm</Fit>
    </div>
  </div>
);

/* ---------- enlarged toolbar callout ---------- */
const BigArrow = () => (
  <svg viewBox="0 0 87 51" className="h-[17px] w-[29px] shrink-0">
    <path d="M0 0H87V12H75V25H62V38H50V51H37V38H24V25H11V12H0z" fill="#262626" />
  </svg>
);
const BigLink = ({ x }) => (
  <g transform={`translate(${x} 0)`}>
    <path d="M967 20V122Q967 164 1008 164H1185Q1223 164 1223 122V78" stroke="#999999" strokeWidth="50" />
    <rect x="1198" y="66" width="50" height="26" rx="12" fill="#909090" />
    <path d="M985 20V110Q990 145 1020 145H1180Q1205 145 1208 122V80" stroke="#7d7d7d" strokeWidth="10" />
    <path d="M1034 30H1092V104H1062Q1056 66 1034 30z" fill="#8a8a8a" />
    <path d="M1160 30H1198L1180 50z" fill="#aaa" />
  </g>
);

const Callout = () => (
  <>
    <svg viewBox="0 0 1921 1031" className="pointer-events-none absolute left-0 top-0 h-[1031px] w-[1921px]" fill="none">
      <path d="M742.5 131L586 431M955 133L1481 430" stroke="#000" strokeWidth="4.6" />
    </svg>
    <div className="absolute left-[739px] top-[118px] h-[93px] w-[217px] rounded-[13px] border-[5px] border-black" />
    <div className="absolute left-[577px] top-[428px] h-[380px] w-[908px] overflow-hidden rounded-[14px] border-[5px] border-black bg-[#f0f0f0]">
      <svg viewBox="36 38 2694 240" className="block h-[80px] w-[898px]" fill="none">
        <path d="M36 38H265V85L155 190L36 145z" fill="#cccccc" />
        <path d="M60 38H215L155 98L36 66z" fill="#dedede" />
        <path d="M36 60L155 98V188M155 98L222 38M36 145L155 188L262 88V38M60 66L100 38" stroke="#868686" strokeWidth="11" />
        <rect x="450" y="20" width="328" height="146" rx="10" fill="#dddddd" />
        <rect x="462" y="20" width="306" height="135" fill="#bcbcbc" stroke="#a9a9a9" strokeWidth="12" />
        <path d="M456 38H494V140H456z" fill="#a5a5a5" />
        <BigLink x={0} />
        <BigLink x={485} />
        <path d="M1938 38H1977V50H1966V62H1950V50H1938z" fill="#77777b" />
      </svg>
      <div className="h-[5px] bg-[#b9b9b9]" />
      <div className="flex h-[174px] items-center pl-[25px] pt-[10px]">
        <div className="mb-[6px] h-[128px] w-1 shrink-0 bg-[#d2d2d2]" />
        <div className="ml-[42px] flex"><Polyline size="h-[120px] w-[120px]" /></div>
        <div className="relative ml-[43px] flex">
          <Rectangle size="h-[120px] w-[120px]" />
          <div className="absolute -left-[25px] -top-[10px] h-[156px] w-[171px] rounded-[14px] border-[5px] border-[#ff5500]" />
        </div>
        <div className="ml-[42px] flex pt-[3px]"><BigArrow /></div>
        <div className="ml-[38px] flex"><Polygon size="h-[120px] w-[120px]" /></div>
        <div className="ml-[43px] flex pt-[3px]"><BigArrow /></div>
        <div className="ml-[39px] flex"><Slot size="h-[120px] w-[120px]" /></div>
        <div className="mb-[6px] ml-[33px] h-[128px] w-1 shrink-0 bg-[#d2d2d2]" />
        <svg viewBox="0 0 30 360" className="ml-[38px] h-[120px] w-[10px] shrink-0 overflow-visible" fill="none">
          <circle cx="54" cy="134" r="50" fill="url(#node)" stroke="#5c0a0c" strokeWidth="11" />
          <rect x="6" y="287" width="40" height="32" fill="#999c9a" stroke="#4d5654" strokeWidth="9" />
        </svg>
      </div>
      <div className="h-[5px] bg-[#b9b9b9]" />
      <div className="mt-1 h-1 bg-white" />
    </div>
    <svg viewBox="1155 800 186 291" className="absolute left-[955px] top-[687px] h-[97px] w-[62px]" fill="none">
      <rect x="1161" y="858" width="171" height="226" rx="62" fill="#fff" />
      <path d="M1246 858H1223Q1161 858 1161 920V942H1246z" fill="#e61f19" />
      <rect x="1161" y="858" width="171" height="226" rx="62" stroke="#000" strokeWidth="6" />
      <path d="M1161 942H1332M1246 804V942" stroke="#000" strokeWidth="5" />
      <text x="1246" y="1031" textAnchor="middle" fontSize="68" fill="#000" className="font-['Inter',sans-serif] font-normal">x 1</text>
    </svg>
  </>
);

export default function App() {
  return (
    <div className="relative flex h-[1031px] w-[1921px] flex-col overflow-hidden bg-[#f0f0f0]">
      <Defs />
      <Header />
      <Toolbars />
      <div className="flex h-[767px] w-full">
        <ComboView />
        <Viewport />
      </div>
      <Status />
      <Callout />
    </div>
  );
}
